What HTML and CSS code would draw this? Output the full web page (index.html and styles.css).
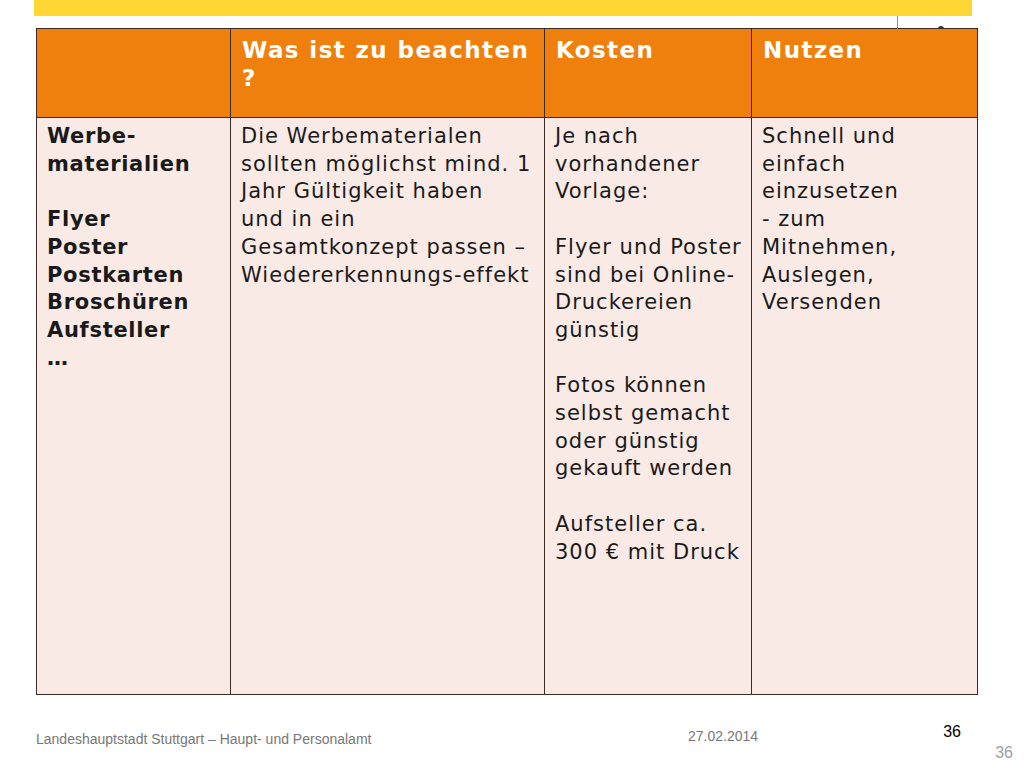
FILE: index.html
```html
<!DOCTYPE html>
<html lang="de">
<head>
<meta charset="utf-8">
<link rel="stylesheet" href="styles.css">
</head>
<body>
<div class="slide">
  <div class="topbar"></div>
  <div class="tick"></div>
  <div class="mark"></div>
  <table class="grid">
    <colgroup>
      <col class="c1"><col class="c2"><col class="c3"><col class="c4">
    </colgroup>
    <thead>
      <tr>
        <th></th>
        <th>Was ist zu beachten ?</th>
        <th>Kosten</th>
        <th>Nutzen</th>
      </tr>
    </thead>
    <tbody>
      <tr>
        <td class="first">Werbe-<br>materialien<br><br>Flyer<br>Poster<br>Postkarten<br>Broschüren<br>Aufsteller<br>…</td>
        <td>Die Werbematerialen<br>sollten möglichst mind. 1<br>Jahr Gültigkeit haben<br>und in ein<br>Gesamtkonzept passen –<br>Wiedererkennungs-effekt</td>
        <td>Je nach<br>vorhandener<br>Vorlage:<br><br>Flyer und Poster<br>sind bei Online-<br>Druckereien<br>günstig<br><br>Fotos können<br>selbst gemacht<br>oder günstig<br>gekauft werden<br><br>Aufsteller ca.<br>300 € mit Druck</td>
        <td>Schnell und<br>einfach<br>einzusetzen<br>- zum<br>Mitnehmen,<br>Auslegen,<br>Versenden</td>
      </tr>
    </tbody>
  </table>
  <div class="footer">
    <span class="org">Landeshauptstadt Stuttgart – Haupt- und Personalamt</span>
    <span class="date">27.02.2014</span>
    <span class="num">36</span>
  </div>
  <div class="pagenum">36</div>
</div>
</body>
</html>
```
FILE: styles.css
```css
html, body {
  margin: 0;
  padding: 0;
  background: #ffffff;
}
.slide {
  position: relative;
  width: 1024px;
  height: 768px;
  overflow: hidden;
  font-family: "DejaVu Sans", Verdana, sans-serif;
}
.topbar {
  margin-left: 34px;
  width: 938px;
  height: 16px;
  background: #ffd633;
}
.tick {
  position: absolute;
  left: 897px;
  top: 16px;
  width: 1px;
  height: 13px;
  background: #8c8c8c;
}
.mark {
  position: absolute;
  left: 938px;
  top: 26px;
  width: 6px;
  height: 3px;
  background: #333;
  border-radius: 3px 3px 0 0;
}
.grid {
  margin: 12px 0 0 36px;
  width: 941px;
  border-collapse: collapse;
  table-layout: fixed;
}
.c1 { width: 194px; }
.c2 { width: 314px; }
.c3 { width: 207px; }
.c4 { width: 226px; }
.grid th, .grid td {
  border: 1px solid #3a2a22;
  vertical-align: top;
  text-align: left;
}
.grid th {
  background: #ef800e;
  color: #ffffff;
  height: 89px;
  box-sizing: border-box;
  padding: 7px 2px 0 11px;
  font-family: "DejaVu Sans", sans-serif;
  font-weight: bold;
  font-size: 23px;
  line-height: 28px;
  letter-spacing: 1.4px;
}
.grid td {
  background: #f9eae6;
  color: #1a1a1a;
  height: 577px;
  box-sizing: border-box;
  padding: 5px 0 0 10px;
  font-size: 21px;
  line-height: 27.7px;
  letter-spacing: 1px;
  white-space: nowrap;
}
.grid td.first {
  font-weight: bold;
  letter-spacing: 0.7px;
}
.footer {
  display: flex;
  align-items: flex-end;
  margin: 28px 0 0 36px;
  width: 925px;
  height: 24px;
  font-family: "Liberation Sans", Arial, sans-serif;
  color: #777777;
  font-size: 14px;
}
.org { width: 652px; }
.date { flex: 1; position: relative; top: -3px; }
.num {
  color: #000;
  font-size: 16px;
  position: relative;
  top: -6px;
}
.pagenum {
  position: absolute;
  right: 11px;
  top: 744px;
  font-family: "Liberation Sans", Arial, sans-serif;
  color: #a0a0a0;
  font-size: 16px;
}
```
